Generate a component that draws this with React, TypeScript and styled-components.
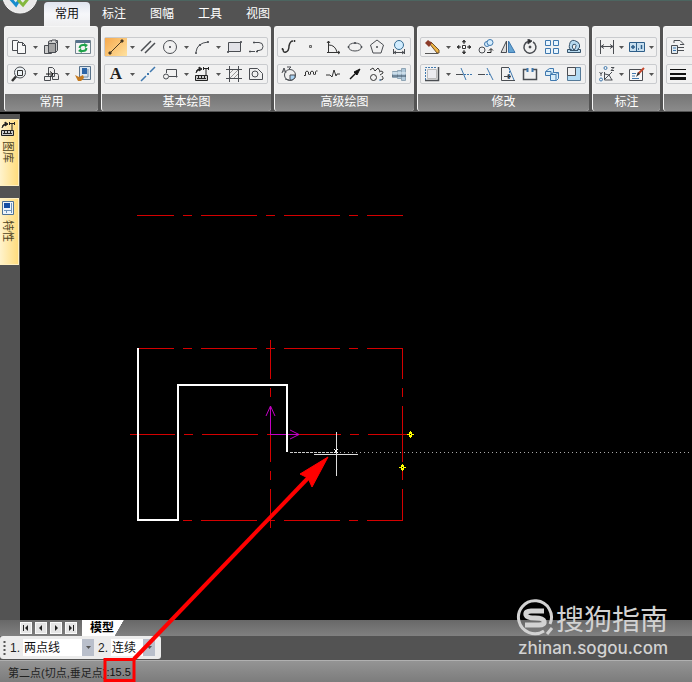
import React from "react";
import styled, { createGlobalStyle, css } from "styled-components";

const Global = createGlobalStyle`
  *, *::before, *::after { box-sizing: border-box; }
  body { margin: 0; background: #535353; overflow: hidden; }
  body, button, select, input { font-family: "Liberation Sans", "Noto Sans CJK SC", sans-serif; font-size: 12px; }
  button { padding: 0; border: 0; background: none; color: inherit; }
  svg { display: block; }
`;

const Page = styled.div`
  position: relative;
  display: flex;
  flex-direction: column;
  height: 100vh;
  min-height: 400px;
  overflow: hidden;
  color: #222;
`;

const Header = styled.header`
  display: flex;
  align-items: flex-end;
  flex: none;
  height: 26px;
  background: #535353;
  border-top: 1px solid #4c6560;
`;

const AppButton = styled.button`
  width: 44px;
  height: 26px;
  overflow: hidden;
`;

const Tab = styled.button<{ $active?: boolean }>`
  width: ${(p) => (p.$active ? 46 : 48)}px;
  height: 24px;
  line-height: 24px;
  color: #fff;
  ${(p) =>
    p.$active &&
    css`
      color: #111;
      background: linear-gradient(#dfe3ee, #f6f7fa 50%, #eeeeef);
      border-radius: 4px 4px 0 0;
    `}
`;

const Ribbon = styled.section`
  display: flex;
  flex: none;
  gap: 3px;
  height: 88px;
  padding: 0 0 1px 4px;
  overflow: hidden;
  background: #535353;
  border-bottom: 2px solid #000;
`;

const Panel = styled.section`
  display: flex;
  flex-direction: column;
  flex: none;
  gap: 7px;
  padding-top: 10px;
  background: #efefef;
  border: 1px solid #f7f7f7;
  border-width: 1px 0 0 1px;
  border-radius: 3px;
  overflow: hidden;
`;

const ToolRow = styled.div<{ $compact?: boolean }>`
  display: flex;
  height: 20px;
  margin: 0 3px 0 2px;
  border: 1px solid #c9cbce;
  border-radius: 2px;
  background: #f1f1f1;
  --tool: ${(p) => (p.$compact ? 21 : 22)}px;
  --drop: ${(p) => (p.$compact ? 9 : 10)}px;
`;

const Tool = styled.button<{ $on?: boolean }>`
  display: grid;
  place-items: center;
  width: var(--tool);
  height: 18px;
  background: ${(p) => (p.$on ? "linear-gradient(135deg, #f6a94c, #ffe2a0)" : "none")};
`;

const Letter = styled.span`
  font-family: "Liberation Serif", serif;
  font-size: 17px;
  font-weight: 700;
  line-height: 18px;
`;

const Drop = styled.button`
  display: grid;
  place-items: center;
  width: var(--drop);
  height: 18px;
`;

const PanelName = styled.h2`
  flex: 1;
  margin: 3px 0 0;
  color: #fff;
  font-size: 12px;
  font-weight: 400;
  line-height: 17px;
  text-align: center;
  background: linear-gradient(#757575, #8b8b8b);
`;

const Work = styled.main`
  display: flex;
  flex: 1;
  min-height: 0;
`;

const Side = styled.aside`
  display: flex;
  flex: none;
  flex-direction: column;
  gap: 12px;
  width: 20px;
  padding-top: 5px;
  background: #535353;
`;

const SideTab = styled.button`
  display: flex;
  flex-direction: column;
  align-items: center;
  gap: 4px;
  width: 19px;
  height: 67px;
  padding: 1px 2px 0 0;
  color: #4e431f;
  background: linear-gradient(90deg, #fff3cc, #ffdc7d);
  border: 1px solid #fff0c0;
  border-left: 0;
`;

const SideText = styled.span`
  writing-mode: vertical-rl;
  text-orientation: sideways;
  font-size: 11px;
  line-height: 14px;
`;

const Canvas = styled.div`
  position: relative;
  flex: 1;
  overflow: hidden;
  background: #000;
`;

const Drawing = styled.svg`
  position: absolute;
  bottom: 0;
  left: 0;
`;

const SheetBar = styled.nav`
  display: flex;
  flex: none;
  align-items: center;
  gap: 3px;
  height: 16px;
  padding-left: 20px;
  background: linear-gradient(#686868, #808080);
`;

const SheetNav = styled.button`
  display: grid;
  place-items: center;
  width: 12px;
  height: 12px;
  background: #e5e5e5;
  border: 1px solid #fafafa;
`;

const SheetTab = styled.button`
  width: 44px;
  height: 16px;
  margin-left: 2px;
  padding: 0 6px 0 8px;
  font-weight: 700;
  line-height: 16px;
  white-space: nowrap;
  color: #000;
  text-align: left;
  background: linear-gradient(120deg, #fff 78%, transparent 79%);
`;

const OptionBand = styled.div`
  display: flex;
  flex: none;
  height: 24px;
  background: #535353;
`;

const Options = styled.div`
  display: flex;
  align-items: center;
  gap: 4px;
  width: 161px;
  height: 23px;
  padding-left: 3px;
  background: #ececec;
  border-radius: 3px;
`;

const Field = styled.label`
  display: flex;
  align-items: center;
  gap: 3px;
`;

const SelectWrap = styled.span<{ $wide?: boolean }>`
  display: flex;
  width: ${(p) => (p.$wide ? 71 : 44)}px;
  height: 17px;
  background: #fff;
`;

const Select = styled.select`
  flex: 1;
  min-width: 0;
  padding: 0 0 0 1px;
  color: #111;
  background: transparent;
  border: 0;
  appearance: none;
`;

const SelectMark = styled.span`
  display: grid;
  place-items: center;
  width: 12px;
  background: #b9bfcb;
`;

const Status = styled.footer`
  display: flex;
  flex: none;
  align-items: center;
  height: 22px;
  padding-left: 8px;
  font-size: 11px;
  background: linear-gradient(#949494, #7c7c7c);
  border-top: 1px solid #b0b0b0;
`;

const StatusLabel = styled.label`
  white-space: nowrap;
`;

const StatusInput = styled.input`
  width: 60px;
  padding: 0;
  color: #111;
  font-size: 11px;
  background: none;
  border: 0;
`;

const Callout = styled.svg`
  position: absolute;
  bottom: 0;
  left: 0;
  pointer-events: none;
`;

const Brand = styled.div`
  position: absolute;
  right: 24px;
  bottom: 24px;
  display: flex;
  flex-direction: column;
  align-items: flex-end;
  color: #d2d2d2;
  pointer-events: none;
`;

const BrandTop = styled.div`
  display: flex;
  align-items: center;
  gap: 2px;
  font-family: "Noto Sans CJK SC", sans-serif;
  font-size: 28px;
  line-height: 40px;
`;

const BrandUrl = styled.div`
  font-family: Inter, sans-serif;
  font-size: 17px;
  font-weight: 500;
  line-height: 20px;
`;

const K = "#4a4d52";
const B = "#3f78ae";

const icons: Record<string, React.ReactNode> = {
  copy: (
    <g fill="#f8f8f8" stroke={K}>
      <path d="M1.500 1.500h5l2 2v8h-7z" />
      <path d="M6.500 3.500h5l3 3v8h-8z" />
      <path d="M11.500 3.500v3h3" fill="none" />
    </g>
  ),
  paste: (
    <g stroke={K}>
      <path d="M1.500 6.500h7v8h-7zM5.500 2.500l2-1h7v10l-2 2h-7z" fill="#c9c9c9" />
      <path d="M5.500 4.500h7v9h-7zM12.500 4.500l2-2" fill="#a4a4a4" />
      <path d="M8 3l1-2h4v2" fill="#ddd" />
    </g>
  ),
  refresh: (
    <g>
      <path d="M.5 1.500h15v13H.5z" fill="#f5f5f5" stroke="#718390" />
      <path d="M1 1h14v3H1z" fill="#56728c" />
      <path d="M4.500 9q.5-3 3.500-3h2M11.500 9q-.5 3-3.500 3H6" fill="none" stroke="#1fa34a" strokeWidth="2" />
      <path d="M9 4l4 2-3 3zM7 14l-4-2 3-3z" fill="#1fa34a" />
    </g>
  ),
  zoom: (
    <g fill="none" stroke={K}>
      <circle cx="9" cy="6.500" r="5.500" fill="#edf2f5" />
      <path d="M6.500 4.500h5v5h-5z" stroke="#333" />
      <path d="M5 10.500L1 15" stroke="#333" strokeWidth="2.500" />
    </g>
  ),
  block: (
    <g fill="#ededed" stroke={K}>
      <path d="M5.500 1.500h4l2 2v7h-6zM1.500 10.500h6v4h-6zM9.500 7.500h5l1 2v4h-6z" />
      <path d="M3 8h6M7 5.500L10 8l-3 2.500" stroke="#111" fill="none" />
    </g>
  ),
  brush: (
    <g>
      <path d="M4.500.5h11v13h-11z" fill="#dce6ef" stroke="#58728b" />
      <path d="M7 2h5v6H7z" fill="#2b65a8" />
      <path d="M13 3v8M7 11h6" stroke="#718da8" />
      <path d="M0 9l4 2 4-2 1 3-3 3H3z" fill="#c47a20" />
    </g>
  ),
  line: (
    <g fill="#333" stroke="#4c3b20">
      <path d="M2 14L14 2" />
      <path d="M1 13h2v2H1zM13 1h2v2h-2z" />
    </g>
  ),
  parallel: <path d="M1 12L11 2M5 14L15 4" stroke={K} strokeWidth="1.500" />,
  circle: (
    <g fill="none" stroke={K}>
      <circle cx="8" cy="8" r="6.500" />
      <path d="M7.500 7.500h1v1h-1z" fill={K} />
    </g>
  ),
  arc: (
    <g fill="none" stroke={K}>
      <path d="M2 13Q3 4 14 3" />
      <path d="M1.500 13.500h1v1h-1zM5.500 5.500h1v1h-1zM13.500 2.500h1v1h-1z" fill={K} />
    </g>
  ),
  rect: (
    <g stroke={K}>
      <path d="M2.500 3.500h12v9h-12z" fill="#e2e2e7" />
      <path d="M1.500 12.500h1v1h-1zM14.500 2.500h1v1h-1z" fill={K} />
    </g>
  ),
  polyline: (
    <g fill="none" stroke={K}>
      <path d="M6 3.500h5q4 0 4 4t-4 4H9" />
      <path d="M3 12.500h4" />
      <path d="M5.500 3h1v1h-1zM1.500 12h1v1h-1zM8.500 12h1v1h-1z" fill={K} />
    </g>
  ),
  axis: (
    <g stroke={B}>
      <path d="M1 15l5-5M10 6l5-5" strokeWidth="1.500" />
      <path d="M7 8h2" strokeWidth="2" />
    </g>
  ),
  contour: (
    <g fill="none" stroke={K}>
      <path d="M4.500 7V3.500h10v7H7" />
      <circle cx="4" cy="10.500" r="2.500" />
      <path d="M14 10h1v1h-1z" fill={K} />
    </g>
  ),
  library: (
    <g fill="none" stroke="#222">
      <path d="M2 7q0-4 4-4M5 1l3 2-3 2z" fill="#222" />
      <path d="M9 2.500h6M12 2v7M9.500 1v3M14.500 1v3" />
      <path d="M1.500 9.500h12v5h-12zM3 12.500h9" fill="#ccc" />
      <path d="M4.500 10v2M7.500 10v2M10.500 10v2" />
    </g>
  ),
  hatch: (
    <g stroke={K}>
      <path d="M3.500 0v16M12.500 0v16M0 3.500h16M0 12.500h16" />
      <path d="M4 7l3-3M4 12l8-8M8 12l4-4" stroke="#999" />
    </g>
  ),
  region: (
    <g fill="#f0f0f0" stroke={K}>
      <path d="M1.500 2.500h8l5 5v6h-13z" />
      <circle cx="7" cy="8" r="3" />
    </g>
  ),
  spline: (
    <g fill="none" stroke="#333">
      <path d="M2 10q0 4 3 3t3-6q1-5 4-5" strokeWidth="1.500" />
      <path d="M1 9.500h1v1H1zM13 1.500h1v1h-1z" fill="#333" />
    </g>
  ),
  point: <path d="M6.500 6.500h2v2h-2z" fill="#ccc" stroke="#666" />,
  axes: (
    <g fill="none" stroke="#333">
      <path d="M3.500 13.500V2M2 13.500h13M13 12l2 1.500-2 1.500M2 4l1.500-2L5 4" />
      <path d="M4 6q6 0 8 7" />
    </g>
  ),
  ellipse: (
    <g fill="none" stroke={K}>
      <ellipse cx="8" cy="8" rx="6.500" ry="4" />
      <path d="M7.500 3.500h1v1h-1zM1 7.500h1v1H1zM14 7.500h1v1h-1z" fill={K} />
    </g>
  ),
  pentagon: (
    <g fill="none" stroke={K}>
      <path d="M8 1l6.500 5-2.500 8H4L1.500 6z" />
      <path d="M7.500 7.500h1v1h-1z" />
    </g>
  ),
  hole: (
    <g stroke={K}>
      <circle cx="8" cy="6" r="4.500" fill="#d2edff" stroke="#376d92" />
      <path d="M2.500 10v5M13.500 10v5M3 13.500h10M5 12l-2 1.500L5 15M11 12l2 1.500-2 1.500" fill="none" />
    </g>
  ),
  pie: (
    <g fill="none" stroke={K}>
      <circle cx="9" cy="9" r="5.500" />
      <path d="M9 9h5v3l-3 2H9z" fill="#a9d3f4" />
      <path d="M1 7l2-5 2 5M2 5h2M6 1h4L8 3M8 14l-4-1" />
    </g>
  ),
  wave: (
    <path d="M1 9.500h1.500V6q1.500-2 3 0v2q1 2 2 0V6q1.500-2 3 0v2q1 2 2 0V6q1-2 2-1" fill="none" stroke="#333" />
  ),
  break: <path d="M1 9h4l2 2 2-7 2 6 1-2h3" fill="none" stroke="#333" />,
  arrow: (
    <g stroke="#111" fill="#111">
      <path d="M3 13L9 7" strokeWidth="1.500" />
      <path d="M13 3L7 6l3 3z" />
    </g>
  ),
  curve: (
    <g fill="none" stroke="#333">
      <path d="M1 4l3-2 2 3 3-3 2 3M10 6q4-2 4 1l-3 2M11 14q5 0 2-4" />
      <circle cx="4.500" cy="11.500" r="3" />
      <path d="M10 14h2" stroke={B} />
    </g>
  ),
  shaft: (
    <g fill="#b1c9db" stroke="#8fa5b5">
      <path d="M1.500 5.500h5v6h-5zM6.500 4.500h4v8h-4zM10.500 2.500h4v12h-4z" />
      <path d="M1 10h14" stroke="#33475a" />
      <path d="M1 7h14" stroke="#e6f2f9" />
    </g>
  ),
  erase: (
    <g>
      <path d="M5 4l2-1 8 8v3h-2z" fill="#edb444" stroke="#70512c" />
      <path d="M1 4l3-3 4 3-3 4z" fill="#8c3c2a" />
      <path d="M1 14.500h13" stroke="#555" />
    </g>
  ),
  move: (
    <g fill="#333" stroke="#333">
      <path d="M8 2v3M8 11v3M2 8h3M11 8h3" />
      <path d="M6.500 3L8 1l1.500 2zM6.500 13L8 15l1.500-2zM3 6.500L1 8l2 1.500zM13 6.500L15 8l-2 1.500z" />
      <path d="M6.500 6.500h3v3h-3z" fill="#fff" />
    </g>
  ),
  duplicate: (
    <g fill="#d7edfc" stroke={B}>
      <circle cx="9" cy="5" r="2.500" />
      <circle cx="12" cy="3.500" r="3" />
      <circle cx="4" cy="11" r="3" fill="none" stroke={K} />
      <path d="M9 13.500h4V10M11 11.500l2-2 2 2" fill="none" stroke="#222" />
    </g>
  ),
  mirror: (
    <g stroke={K}>
      <path d="M6.500 2v11.500H1z" fill="#ddd" />
      <path d="M8.500 2v11.500H15z" fill="#65a4d2" stroke={B} />
    </g>
  ),
  rotate: (
    <g fill="none" stroke={K}>
      <path d="M6 2.500a6 6 0 1 0 5 .5" strokeWidth="1.500" />
      <path d="M6 0l4 2-4 3z" fill="#222" />
      <circle cx="8" cy="8" r="1" fill="#222" />
    </g>
  ),
  array: (
    <path
      d="M1.500 1.500h5v5h-5zM9.500 1.500h5v5h-5zM1.500 9.500h5v5h-5zM9.500 9.500h5v5h-5z"
      fill="#e7f5ff"
      stroke={B}
    />
  ),
  offset: (
    <g fill="none" stroke="#36536b">
      <path d="M1.500 10.500v3h13v-3h-3q3-2 2-5t-5-4-5 4 2 5z" fill="#b6d9ef" />
      <path d="M4 11.500h4q-3-4-1-6 3-1 3 1t-2 5h4" fill="#f1f1f1" />
    </g>
  ),
  stretch: (
    <g fill="none" stroke={K}>
      <path d="M3.500 3.500h9v9h-9z" fill="#ececf0" stroke="#bbb" />
      <path d="M1.500 14V1.500H13" stroke={B} strokeDasharray="2 1" />
      <path d="M14.500 1v13.500H1" strokeWidth="1.500" />
    </g>
  ),
  trim: (
    <g stroke={B}>
      <path d="M5 2l5 12" />
      <path d="M0 8.500h7" stroke={K} />
      <path d="M8 8.500h8" strokeDasharray="2 1" />
    </g>
  ),
  extend: (
    <g stroke={B}>
      <path d="M9 2l6 12" />
      <path d="M0 8.500h7" stroke={K} />
      <path d="M8 8.500h4" strokeDasharray="2 1" />
    </g>
  ),
  extrude: (
    <g fill="none" stroke={K}>
      <path d="M9 1.500H1.500v13H15" />
      <path d="M9 2l5 12" stroke={B} />
      <path d="M4 10.500h5M8 8.500l3 2-3 2z" fill="#222" />
      <path d="M9.500 2v12" stroke={B} strokeDasharray="2 1" />
    </g>
  ),
  breakAt: (
    <g fill="none" stroke={K}>
      <path d="M6 3.500H1.500v10h13v-10H10" strokeWidth="1.500" />
      <path d="M5.500 2v4M10.500 2v4" stroke={B} strokeWidth="2" />
    </g>
  ),
  scale: (
    <g fill="#d9edf9" stroke={B}>
      <path d="M1.500 5.500l4-3h4v5l-3 2h-5z" />
      <path d="M6.500 8.500l3-2h5v6l-2 2h-6z" />
      <path d="M2 5.500h5V9M7 8.500h5v6M12 8.500l2-2" fill="none" />
    </g>
  ),
  corner: (
    <g stroke="#557a98">
      <path d="M1.500 1.500h13v13h-13z" fill="#b4dcf4" />
      <path d="M1.500 1.500h8v8h-8z" fill="#f0f0f0" stroke={K} />
    </g>
  ),
  dimension: (
    <path d="M1.500 1v14M14.500 1v14M2 7.500h12M5 5.500l-3 2 3 2M11 5.500l3 2-3 2" stroke={K} fill="none" />
  ),
  tolerance: (
    <g fill="none" stroke="#2d5e89">
      <path d="M.5 3.500h15v9H.5z" fill="#c7dfef" />
      <path d="M7.500 4v8" />
      <path d="M2 8h4M4 6v4M9 10h1M12.500 6v4" strokeWidth="1.500" />
    </g>
  ),
  coordinate: (
    <g fill="none" stroke={K}>
      <path d="M5.500 6v8h8M6 13l4-4 3-3M6 8l4 1 3 5" />
      <circle cx="6.500" cy="2" r="1.500" stroke={B} />
      <circle cx="2" cy="13.500" r="1.500" stroke={B} />
      <path d="M.5 6L2 8l1.500-2M2 8v2M12 1.500h3l-3 3h3" />
    </g>
  ),
  edit: (
    <g>
      <path d="M.5 3.500h13v11H.5z" fill="#f8f8f8" stroke={K} />
      <path d="M3 7.500h4M3 10h3M3 12.500h7" stroke={B} />
      <path d="M15 2L9 8" stroke="#c4482d" strokeWidth="2" />
      <path d="M9 6l2 2-4 3z" fill="#333" />
    </g>
  ),
  layers: (
    <g fill="none" stroke={K}>
      <path d="M4 4V1.500h6l4 4h-4M8 8.500h6M8 11.500h6" />
      <path d="M1.500 6.500h6v8h-6z" fill="#e0eaf1" />
      <path d="M3 9h3M3 11.500h3" stroke={B} />
    </g>
  ),
  weight: (
    <g stroke="#111">
      <path d="M0 3.500h16" />
      <path d="M0 8h16" strokeWidth="2" />
      <path d="M0 12.500h16" strokeWidth="3" />
    </g>
  ),
  props: (
    <g>
      <path d="M2.500 1.500h11v13h-11z" fill="#edf4fb" stroke="#4e7296" />
      <path d="M4 3h6v5H4z" fill="#174fa3" />
      <path d="M11.500 3v10M4 10.500h8M6.500 10v3" stroke="#6c91b8" />
    </g>
  ),
};

const Icon = ({ name }: { name: string }) =>
  name === "text" ? (
    <Letter>A</Letter>
  ) : (
    <svg width="16" height="16" viewBox="0 0 16 16" aria-hidden="true">
      {icons[name]}
    </svg>
  );

const Caret = () => (
  <svg width="5" height="3" viewBox="0 0 5 3" aria-hidden="true">
    <path d="M0 0h5L2.500 3z" fill="#555" />
  </svg>
);

type PanelData = { name: string; compact?: boolean; rows: string[] };

const panels: PanelData[] = [
  { name: "常用", rows: ["copy v paste v refresh", "zoom v block v brush"] },
  {
    name: "基本绘图",
    rows: ["line v parallel circle v arc v rect polyline", "text v axis contour v library v hatch region"],
  },
  { name: "高级绘图", rows: ["spline point axes ellipse pentagon hole", "pie wave break arrow curve shaft"] },
  {
    name: "修改",
    rows: ["erase v move duplicate mirror rotate array offset", "stretch v trim extend extrude breakAt scale corner"],
  },
  { name: "标注", compact: true, rows: ["dimension v tolerance v", "coordinate v edit v"] },
  { name: "", rows: ["layers v", "weight v"] },
];

const RibbonPanel = ({ name, rows, compact }: PanelData) => (
  <Panel>
    {rows.map((row) => (
      <ToolRow key={row} $compact={compact}>
        {row.split(" ").map((id, i) =>
          id === "v" ? (
            <Drop key={i} aria-label="more">
              <Caret />
            </Drop>
          ) : (
            <Tool key={i} aria-label={id} $on={id === "line"}>
              <Icon name={id} />
            </Tool>
          )
        )}
      </ToolRow>
    ))}
    <PanelName>{name}</PanelName>
  </Panel>
);

const Snap = ({ x, y }: { x: number; y: number }) => (
  <g>
    <path d={`M${x - 3} ${y}h2v-2h1v-1h1v1h1v2h2v1h-2v2h-1v1h-1v-1h-1v-2h-2z`} fill="#ff0" />
    <path d={`M${x} ${y}h1v1h-1z`} fill="#000" />
  </g>
);

const Model = () => (
  <Drawing width="100%" height="506" aria-label="drawing">
    <g transform="translate(-20 -114)" fill="none">
      <g stroke="#d40000" strokeDasharray="56 9 9 9">
        <path d="M137 215.500h266" strokeDashoffset="19" />
        <path d="M137 348.500h266" strokeDashoffset="19" />
        <path d="M130 434.500h280" strokeDashoffset="11" />
        <path d="M137 520.500h266" strokeDashoffset="19" />
        <path d="M270.500 340v189" strokeDasharray="39 9 9 9 56 9 9 9" />
        <path d="M402.500 348v172" strokeDasharray="31 9 9 9 56 9 9 9" />
      </g>
      <path
        d="M270.500 435v-28M266 416l4.500-10 4.500 10M271 434.500h28M290 430l9 4.500-9 4.500"
        stroke="#c400c4"
      />
      <path d="M138 348v172h40V385h109v67" stroke="#fff" strokeWidth="2" />
      <path d="M290 452.500h46" stroke="#ccc" strokeDasharray="3 1" />
      <path d="M340 452.500h3000" stroke="#aaa" strokeDasharray="1 3" />
      <path d="M336.500 432v44M314 454.500h44" stroke="#ddd" />
      <path d="M334 449l4 4M338 449l-4 4" stroke="#fff" />
    </g>
    <g transform="translate(-20 -114)">
      <Snap x={410} y={434} />
      <Snap x={402} y={467} />
    </g>
  </Drawing>
);

const navGlyphs = [
  ["first sheet", "M1 1h1v6H1zM6 1v6L3 4z"],
  ["previous sheet", "M5 1v6L2 4z"],
  ["next sheet", "M3 1v6l3-3z"],
  ["last sheet", "M2 1v6l3-3zM6 1h1v6H6z"],
];

export default function App() {
  return (
    <>
      <Global />
      <Page>
        <Header>
          <AppButton aria-label="menu">
            <svg width="44" height="26" viewBox="0 0 44 26">
              <circle cx="20" cy="-4" r="17" fill="#e9e9e9" stroke="#f9f9f9" />
              <path d="M9-3l7 8 5-8" fill="none" stroke="#168ccd" strokeWidth="3" />
              <path d="M18 0l5 5 8-10" fill="none" stroke="#84b83d" strokeWidth="3" />
            </svg>
          </AppButton>
          {["常用", "标注", "图幅", "工具", "视图"].map((t, i) => (
            <Tab key={t} $active={i === 0}>
              {t}
            </Tab>
          ))}
        </Header>
        <Ribbon>
          {panels.map((p, i) => (
            <RibbonPanel key={i} {...p} />
          ))}
        </Ribbon>
        <Work>
          <Side>
            <SideTab>
              <Icon name="library" />
              <SideText>图库</SideText>
            </SideTab>
            <SideTab>
              <Icon name="props" />
              <SideText>特性</SideText>
            </SideTab>
          </Side>
          <Canvas>
            <Model />
          </Canvas>
        </Work>
        <SheetBar>
          {navGlyphs.map(([label, d]) => (
            <SheetNav key={label} aria-label={label}>
              <svg width="8" height="8" viewBox="0 0 8 8">
                <path d={d} fill="#222" />
              </svg>
            </SheetNav>
          ))}
          <SheetTab>模型</SheetTab>
        </SheetBar>
        <OptionBand>
          <Options>
            <svg width="3" height="14" viewBox="0 0 3 14">
              <path d="M1.500 0v14" stroke="#555" strokeWidth="2" strokeDasharray="2 2" />
            </svg>
            <Field>
              1.
              <SelectWrap $wide>
                <Select defaultValue="两点线">
                  <option>两点线</option>
                </Select>
                <SelectMark>
                  <Caret />
                </SelectMark>
              </SelectWrap>
            </Field>
            <Field>
              2.
              <SelectWrap>
                <Select defaultValue="连续">
                  <option>连续</option>
                </Select>
                <SelectMark>
                  <Caret />
                </SelectMark>
              </SelectWrap>
            </Field>
          </Options>
        </OptionBand>
        <Status>
          <StatusLabel htmlFor="command">第二点(切点,垂足点)</StatusLabel>
          <StatusInput id="command" defaultValue=":15.5" />
        </Status>
        <Callout width="340" height="232" viewBox="0 450 340 232" aria-hidden="true">
          <path d="M105 659.500h29v21h-29z" fill="none" stroke="#f00" strokeWidth="3" />
          <path d="M134 659L310 476" stroke="#f00" strokeWidth="4" />
          <path d="M328 457L300 474l8 4 4 9z" fill="#f00" stroke="#f00" />
        </Callout>
        <Brand>
          <BrandTop>
            <svg width="38" height="38" viewBox="0 0 38 38" aria-hidden="true">
              <path d="M28 32A16.500 16.500 0 1 1 34 25" fill="none" stroke="currentColor" strokeWidth="3" />
              <path d="M31 35l5-6" stroke="currentColor" strokeWidth="3" />
              <path
                d="M28 12H15q-6 0-5 4 1 3 9 3t9 3q1 4-5 4H9"
                fill="none"
                stroke="currentColor"
                strokeWidth="5"
              />
            </svg>
            搜狗指南
          </BrandTop>
          <BrandUrl>zhinan.sogou.com</BrandUrl>
        </Brand>
      </Page>
    </>
  );
}
